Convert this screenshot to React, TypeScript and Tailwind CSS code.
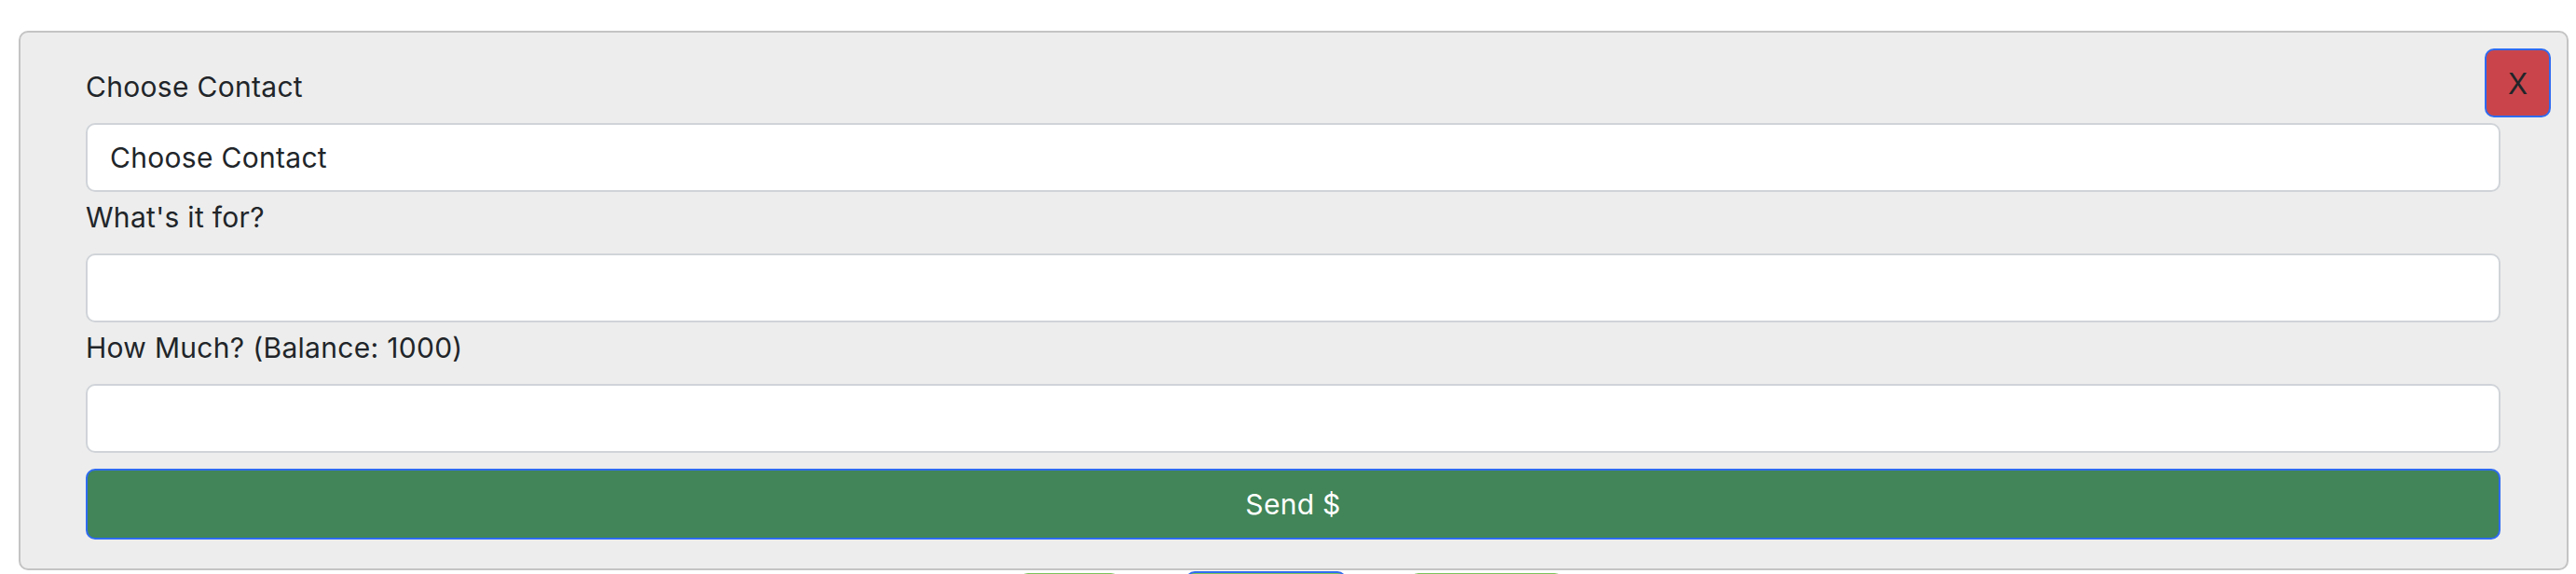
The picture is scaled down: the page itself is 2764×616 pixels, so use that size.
const FONT = "font-['Inter','Liberation_Sans',sans-serif]";

export default function App() {
  return (
    <div className={`min-h-[616px] bg-white pt-[33px] text-[#212529] ${FONT}`}>
      <div className="relative ml-[20px] w-[2736px] rounded-[10px] border-2 border-[#c4c4c4] bg-[#ededed] pb-[31px] pl-[70px] pr-[71px] pt-[37px]">
        <button className="absolute right-[17px] top-[17px] flex h-[74px] w-[71px] items-center justify-center rounded-[10px] border-2 border-[#2f6bf0] bg-[#c9454b] text-[31px] leading-none text-[#212529]">
          X
        </button>

        <FieldLabel text="Choose Contact" />
        <Field className="mt-[18px]" value="Choose Contact" />

        <FieldLabel text="What's it for?" className="mt-[6px]" />
        <Field className="mt-[18px]" />

        <FieldLabel text="How Much? (Balance: 1000)" className="mt-[6px]" />
        <Field className="mt-[18px]" />

        <button className="mt-[17px] flex h-[76px] w-full items-center justify-center rounded-[10px] border-2 border-[#2f6bf0] bg-[#418558] text-[30px] tracking-[0.3px] text-white">
          Send $
        </button>
      </div>

      {/* tabs peeking out from under the panel */}
      <div className="mt-[1px] flex items-start">
        <div className="ml-[1093px] mt-[2px] h-[40px] w-[109px] rounded-t-[10px] bg-[#7cc35a]" />
        <div className="ml-[70px] h-[40px] w-[173px] rounded-t-[10px] border-2 border-[#2f6bf0] bg-[#7cc35a]" />
        <div className="ml-[67px] mt-[2px] h-[40px] w-[166px] rounded-t-[10px] bg-[#7cc35a]" />
      </div>
    </div>
  );
}

function FieldLabel({ text, className = "" }: { text: string; className?: string }) {
  return <div className={`h-[42px] text-[30px] leading-[42px] tracking-[0.3px] ${className}`}>{text}</div>;
}

function Field({ value, className = "" }: { value?: string; className?: string }) {
  return (
    <div
      className={`flex h-[74px] items-center rounded-[10px] border-2 border-[#d0d4d9] bg-white px-[24px] text-[30px] tracking-[0.3px] ${className}`}
    >
      {value}
    </div>
  );
}
